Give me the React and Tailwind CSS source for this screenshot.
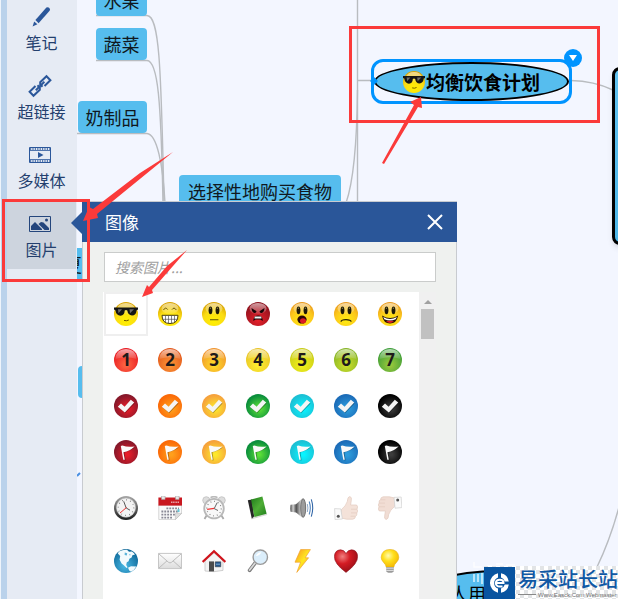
import React from "react";

const Defs = () => (
  <svg width="0" height="0" className="absolute" aria-hidden="true">
    <defs>
      <radialGradient id="face" cx="50%" cy="80%" r="75%">
        <stop offset="0" stopColor="#fff000" />
        <stop offset="0.6" stopColor="#fbdc14" />
        <stop offset="1" stopColor="#d9a400" />
      </radialGradient>
      <radialGradient id="faceWarm" cx="50%" cy="75%" r="75%">
        <stop offset="0" stopColor="#ffee10" />
        <stop offset="0.6" stopColor="#fcc81c" />
        <stop offset="1" stopColor="#e8961c" />
      </radialGradient>
      <radialGradient id="faceRed" cx="50%" cy="75%" r="75%">
        <stop offset="0" stopColor="#e8202a" />
        <stop offset="1" stopColor="#86101c" />
      </radialGradient>
      <linearGradient id="gloss" x1="0" y1="0" x2="0" y2="1">
        <stop offset="0" stopColor="#fff" stopOpacity="0.85" />
        <stop offset="1" stopColor="#fff" stopOpacity="0.15" />
      </linearGradient>
      <linearGradient id="shade" x1="0" y1="0" x2="0" y2="1">
        <stop offset="0" stopColor="#ffffff" />
        <stop offset="1" stopColor="#dcdcdc" />
      </linearGradient>
      <linearGradient id="dark" x1="0" y1="0" x2="0" y2="1">
        <stop offset="0" stopColor="#a8a8a8" />
        <stop offset="1" stopColor="#1c1c1c" />
      </linearGradient>
      <linearGradient id="leaf" x1="0" y1="0" x2="1" y2="1">
        <stop offset="0" stopColor="#1e7a1a" />
        <stop offset="0.5" stopColor="#4fae36" />
        <stop offset="1" stopColor="#1f7d1c" />
      </linearGradient>
      <radialGradient id="sea" cx="45%" cy="70%" r="70%">
        <stop offset="0" stopColor="#48b8e4" />
        <stop offset="1" stopColor="#0c6596" />
      </radialGradient>
      <linearGradient id="metal" x1="0" y1="0" x2="1" y2="0">
        <stop offset="0" stopColor="#4a4a4a" />
        <stop offset="0.5" stopColor="#d0d0d0" />
        <stop offset="1" stopColor="#585858" />
      </linearGradient>
      <linearGradient id="bolt" x1="0" y1="0" x2="1" y2="1">
        <stop offset="0" stopColor="#f7931e" />
        <stop offset="0.5" stopColor="#ffe820" />
        <stop offset="1" stopColor="#f08a1c" />
      </linearGradient>
      <radialGradient id="love" cx="35%" cy="30%" r="80%">
        <stop offset="0" stopColor="#f08080" />
        <stop offset="0.4" stopColor="#d41c24" />
        <stop offset="1" stopColor="#8c0c14" />
      </radialGradient>
      <radialGradient id="bulb" cx="40%" cy="35%" r="70%">
        <stop offset="0" stopColor="#fffbb0" />
        <stop offset="0.45" stopColor="#ffdf1c" />
        <stop offset="1" stopColor="#f3b400" />
      </radialGradient>
    </defs>
  </svg>
);

const Icon = ({ size = 24, children }) => (
  <svg width={size} height={size} viewBox="0 0 24 24" aria-hidden="true">
    {children}
  </svg>
);

const Ball = ({ fill }) => (
  <>
    <circle cx="12" cy="12" r="12" fill={`url(#${fill})`} />
    <ellipse cx="12" cy="6.5" rx="8.5" ry="5.5" fill="url(#gloss)" opacity="0.7" />
  </>
);

const CoolFace = ({ size }) => (
  <Icon size={size}>
    <Ball fill="face" />
    <path d="M0 5.5H24V7.5L22.6 8.3Q22 13.5 18 13.5Q14 13.3 13.3 8.6Q12 7.6 10.7 8.6Q10.5 13.5 6.5 13.8Q2.3 13.6 1.4 8.3L0 7.5Z" fill="#141414" />
    <path d="M4 7.2l4 0-3.5 4zM15.5 7.2h4.5l-4 4z" fill="#8a8a8a" opacity="0.75" />
    <path d="M10 18.4q2.5.9 4.8-.4" stroke="#6d5200" strokeWidth="1" fill="none" />
  </Icon>
);

const eyes = (
  <>
    <ellipse cx="8.5" cy="8.3" rx="1.9" ry="3.9" fill="#1c1808" />
    <ellipse cx="15.5" cy="8.3" rx="1.9" ry="3.9" fill="#1c1808" />
    <circle cx="8.4" cy="6.3" r="0.7" fill="#8a8040" />
    <circle cx="15.4" cy="6.3" r="0.7" fill="#8a8040" />
  </>
);

const faces = [
  { name: "墨镜", art: <CoolFace /> },
  {
    name: "大笑",
    art: (
      <Icon>
        <Ball fill="face" />
        <path d="M5.5 8Q7.5 4.5 9.7 7.6M14 7.6Q16 4.5 18.3 8" stroke="#5c4b10" strokeWidth="0.9" fill="none" />
        <path d="M4 13.3H20Q20 21.5 12 21.5Q4 21.5 4 13.3Z" fill="#fff" stroke="#4a3d08" />
        <path d="M4.5 17.3H19.5M7.5 13.5V20M10.5 13.5V21.3M13.5 13.5V21.3M16.5 13.5V20" stroke="#555" strokeWidth="0.7" />
      </Icon>
    ),
  },
  {
    name: "平静",
    art: (
      <Icon>
        <Ball fill="face" />
        {eyes}
        <path d="M8 17.7h8.4" stroke="#75680c" strokeWidth="1.2" />
      </Icon>
    ),
  },
  {
    name: "生气",
    art: (
      <Icon>
        <Ball fill="faceRed" />
        <path d="M5.5 6l5 3.2q-.2 2-2 1.8-2.6-.4-3-5zM18.5 6l-5 3.2q.2 2 2 1.8 2.6-.4 3-5z" fill="#160406" />
        <path d="M7.3 19Q7.4 13.6 12 13.6T16.8 19L14.4 17.6H9.6Z" fill="#160406" />
        <path d="M8.8 14.6h6.4l.4 1.8H8.4z" fill="#f4f4f4" />
      </Icon>
    ),
  },
  {
    name: "惊讶",
    art: (
      <Icon>
        <Ball fill="faceWarm" />
        {eyes}
        <ellipse cx="12" cy="17.6" rx="4.6" ry="4" fill="#2c0808" />
        <ellipse cx="13" cy="18.8" rx="3" ry="2.6" fill="#dc1c24" />
      </Icon>
    ),
  },
  {
    name: "难过",
    art: (
      <Icon>
        <Ball fill="faceWarm" />
        {eyes}
        <path d="M7 19.6q.4-2 5-2t5.2 2" stroke="#2c2408" strokeWidth="1.4" fill="none" />
      </Icon>
    ),
  },
  {
    name: "开心",
    art: (
      <Icon>
        <Ball fill="faceWarm" />
        {eyes}
        <path d="M4 13.5Q12 18.5 20.2 13.5Q18.5 21.6 12 21.6T4 13.5Z" fill="#241004" />
        <path d="M5.2 15Q12 19 18.9 15L17.7 17.2Q12 20 6.3 17.2Z" fill="#fff" />
        <path d="M8 19.6q4-1.6 8 0-4 2.8-8 0z" fill="#e01c24" />
      </Icon>
    ),
  },
];

const numberColors = [
  ["#ff6a45", "#e81820"],
  ["#ff9a38", "#e2581c"],
  ["#ffe028", "#f0942c"],
  ["#fff030", "#e8c428"],
  ["#f6f41c", "#c8cc18"],
  ["#d2e22c", "#86b424"],
  ["#a0cc3c", "#3c9c38"],
];

const numbers = numberColors.map(([inner, outer], i) => ({
  name: `数字 ${i + 1}`,
  art: (
    <Icon>
      <defs>
        <radialGradient id={`num${i}`} cx="50%" cy="70%" r="65%">
          <stop offset="0" stopColor={inner} />
          <stop offset="1" stopColor={outer} />
        </radialGradient>
      </defs>
      <circle cx="12" cy="12" r="12" fill={`url(#num${i})`} />
      <path d="M1.5 11Q2 1 12 1T22.5 11Q12 7.5 1.5 11Z" fill="url(#gloss)" opacity="0.75" />
      <text x="12" y="18" textAnchor="middle" fontSize="17" fontWeight="700" fill="#1e1a1a" className="font-['Noto_Sans','Open_Sans',sans-serif]">
        {i + 1}
      </text>
    </Icon>
  ),
}));

const tokenColors = [
  ["#e81c28", "#86182a"],
  ["#ffa01c", "#fb6a08"],
  ["#fde82c", "#f6a23c"],
  ["#5ade38", "#0a8e3c"],
  ["#08f4ff", "#1cc0d4"],
  ["#2c9cdc", "#1c6cb8"],
  ["#3c3c3c", "#000000"],
];

const token = (kind, glyph) =>
  tokenColors.map(([inner, outer], i) => ({
    name: `${kind} ${i + 1}`,
    art: (
      <Icon>
        <defs>
          <radialGradient id={`${kind}${i}`} cx="55%" cy="60%" r="55%">
            <stop offset="0.1" stopColor={inner} />
            <stop offset="1" stopColor={outer} />
          </radialGradient>
        </defs>
        <circle cx="12" cy="12" r="12" fill={`url(#${kind}${i})`} />
        {glyph}
      </Icon>
    ),
  }));

const checks = token(
  "check",
  <>
    <path d="M4.6 13.6L7.6 10.6L11 14L17.4 7L20.6 9.4L11.2 19.2Z" fill="#000" opacity="0.3" />
    <path d="M3.8 12.8L7 9.4L10.6 12.8L16.8 5.8L20.2 8.6L10.8 18.6Z" fill="#f5f5f5" />
  </>
);

const flags = token(
  "flag",
  <>
    <path d="M8 6.8Q14 8.5 21 7.6Q16.5 11 10.6 12.6L11.6 20.4L10 20.2Z" fill="#000" opacity="0.3" />
    <path d="M6.8 6L8.4 5.5Q13.5 7.4 20.6 6.4Q16 10.8 9.4 12.2L10.8 19.8H9.3Z" fill="#fafafa" />
  </>
);

const objects = [
  {
    name: "时钟",
    art: (
      <Icon>
        <circle cx="12" cy="12" r="12" fill="url(#dark)" />
        <circle cx="12" cy="11.6" r="9.6" fill="#f3f3f3" stroke="#bbb" strokeWidth="0.6" />
        <circle cx="12" cy="11.6" r="7.8" fill="none" stroke="#777" strokeWidth="1.2" strokeDasharray="0.8 3.28" />
        <path d="M9.7 5.3L12.2 12L16 14.2" stroke="#444" strokeWidth="0.9" fill="none" />
        <path d="M12.5 11.5L6 17" stroke="#e33" strokeWidth="1" />
      </Icon>
    ),
  },
  {
    name: "日历",
    art: (
      <Icon>
        <path d="M.8 9H23.6V17.5L17.4 23.6H.8Z" fill="#fafafa" stroke="#c4c4c4" strokeWidth="0.7" />
        <path d="M17.4 23.6V17.4H23.6Z" fill="#ddd" stroke="#b4b4b4" strokeWidth="0.5" />
        <path d="M.4 1.5H24V9.6H.4Z" fill="#c91820" />
        <path d="M13 6.3H21" stroke="#e7a3a6" strokeWidth="1.6" strokeDasharray="1.2 .5" />
        <path d="M3.5 0h3.6v3.4H3.5zM17.5 0h3.6v3.4h-3.6z" fill="#e8e8e8" stroke="#999" strokeWidth="0.5" />
        <path d="M8.4 12.3H21M3.4 15.5H21M3.4 18.7H17M3.4 21.6H15" stroke="#8a8a96" strokeWidth="1.8" strokeDasharray="1.9 1" />
        <path d="M19.5 13h2v3h-2z" fill="#66c8d8" />
      </Icon>
    ),
  },
  {
    name: "闹钟",
    art: (
      <Icon>
        <path d="M4.6 19.5L2.5 23M19.4 19.5L21.6 23" stroke="#aaa" strokeWidth="1.8" />
        <circle cx="4.3" cy="4.3" r="3.6" fill="#ddd" stroke="#bbb" strokeWidth="0.7" />
        <circle cx="19.7" cy="4.3" r="3.6" fill="#ddd" stroke="#bbb" strokeWidth="0.7" />
        <path d="M8.5 1.6Q12-.3 15.5 1.6" stroke="#bbb" strokeWidth="1.6" fill="none" />
        <circle cx="12" cy="12.6" r="9.8" fill="#f8f8f8" stroke="#b8b8b8" strokeWidth="1.8" />
        <circle cx="12" cy="12.6" r="7.2" fill="none" stroke="#777" strokeWidth="1.2" strokeDasharray="0.8 2.97" />
        <path d="M15.2 6.6L12.2 12.6L16 14.5" stroke="#555" strokeWidth="0.9" fill="none" />
        <path d="M12.2 12.4L5.2 13.4" stroke="#e33" strokeWidth="1.1" />
      </Icon>
    ),
  },
  {
    name: "书本",
    art: (
      <Icon>
        <path d="M1.8 4.3L6 3.6L8.2 21.3L5.8 22.8Z" fill="#262626" />
        <path d="M5.8 22.8L8.2 20.6L20 17.4L20.8 18.6Z" fill="#e8ece8" stroke="#aaa" strokeWidth="0.4" />
        <path d="M5 3.5L16.4.6L20.6 17.8L8.4 21Z" fill="url(#leaf)" />
      </Icon>
    ),
  },
  {
    name: "喇叭",
    art: (
      <Icon>
        <path d="M.6 8.7Q0 12 .6 15.8L6 16.4V8.2Z" fill="url(#metal)" />
        <path d="M6 8.2L12.2 2.6Q15.4 2 15.8 12Q15.4 22 12.2 21.6L6 16.4Z" fill="url(#metal)" />
        <ellipse cx="13.2" cy="12" rx="2.5" ry="9.2" fill="#9c9c9c" stroke="#6a6a6a" strokeWidth="0.8" />
        <path d="M17.3 8q1.3 4 0 8" stroke="#8ea8c8" strokeWidth="1" fill="none" />
        <path d="M19.2 5.5q2.2 6.5 0 13" stroke="#5686bc" strokeWidth="1.1" fill="none" />
        <path d="M21.3 3.4q2.8 8.6 0 17.2" stroke="#3468a8" strokeWidth="1.1" fill="none" />
      </Icon>
    ),
  },
  {
    name: "赞",
    art: (
      <Icon>
        <path d="M7.4 13.5Q12 10 13.3 5.5Q13.6.6 15.8.5Q18.2.8 17.2 5L16.6 9H22.6Q24.4 10.6 23 13.2Q24.4 15.2 22.8 17Q23.4 19.4 21.5 20.4Q21.4 22.8 18.8 23.2H12.5L7.4 22Z" fill="#f4e2d9" stroke="#e2cabf" strokeWidth="0.7" />
        <path d="M17 13.2h5.8M17 16.9h5.6M16.6 20.2h4.6" stroke="#e2cabf" strokeWidth="0.7" />
        <path d="M.6 12.6L6.8 12.9L8.4 23L1 23.6Z" fill="#fafafa" stroke="#d0d0d0" strokeWidth="0.7" />
        <circle cx="4.3" cy="20.3" r="1.5" fill="#555" />
      </Icon>
    ),
  },
  {
    name: "踩",
    art: (
      <Icon>
        <path d="M16.6 10.5Q12 14 10.7 18.5Q10.4 23.4 8.2 23.5Q5.8 23.2 6.8 19L7.4 15H1.4Q-.4 13.4 1 10.8Q-.4 8.8 1.2 7Q.6 4.6 2.5 3.6Q2.6 1.2 5.2.8H11.5L16.6 2Z" fill="#f1ddd4" stroke="#e2cabf" strokeWidth="0.7" />
        <path d="M1.2 10.8H7M1.4 7.1H7M2.8 3.8H7.4" stroke="#e2cabf" strokeWidth="0.7" />
        <path d="M16 1.4L23.2 1L23.8 11.6L17 12.2Z" fill="#fafafa" stroke="#d0d0d0" strokeWidth="0.7" />
        <circle cx="19.7" cy="3.9" r="1.5" fill="#555" />
      </Icon>
    ),
  },
  {
    name: "地球",
    art: (
      <Icon>
        <circle cx="12" cy="12" r="12" fill="url(#sea)" />
        <path d="M5 2.4Q9 .4 13 .8L15 2.8L18 2.4Q20 3.8 21 5.6L18.4 6.2L17.6 8.6L15.4 9.8L14.6 12.2L12.8 13.2L12.2 16L13.6 18.2L12.6 19L9.8 16.2L7.6 14.6L5.6 10.8L6.2 7L3.8 4.6Z" fill="#f2fafd" />
        <path d="M14 18.8L17 17.2L22.4 17.6Q20.4 21.2 17 22.8L15.2 21.6Z" fill="#f2fafd" />
        <path d="M10.8 3.6l2.4.6-.4 2.2-2.2-.4zM15 5l1.6.4-.6 1.4z" fill="#5cb4da" />
      </Icon>
    ),
  },
  {
    name: "邮件",
    art: (
      <Icon>
        <path d="M.5 4.4H23.5V19.6H.5Z" fill="url(#shade)" stroke="#c6c6c6" />
        <path d="M.8 19.2L9 11.8M23.2 19.2L15 11.8M.8 4.8L10.6 13.4Q12 14.4 13.4 13.4L23.2 4.8" stroke="#bcbcbc" fill="none" />
      </Icon>
    ),
  },
  {
    name: "房子",
    art: (
      <Icon>
        <path d="M3 11.8L12 3.8L21 11.8V21.4Q12 23.6 3 22Z" fill="#f4f4f4" stroke="#bdbdbd" strokeWidth="0.7" />
        <path d="M7 12.4H12V22.4H7Z" fill="#4c4c4c" />
        <path d="M13.2 12.8H18.8V17.8H13.2Z" fill="#28588c" stroke="#333" strokeWidth="0.5" />
        <path d="M14 15.2h4" stroke="#7bacd4" strokeWidth="1" />
        <path d="M.6 13L12 2.2L23.4 13" stroke="#d0141c" strokeWidth="2.2" fill="none" />
      </Icon>
    ),
  },
  {
    name: "放大镜",
    art: (
      <Icon>
        <path d="M9.6 13.4L3.6 21.4" stroke="#777" strokeWidth="3.6" strokeLinecap="round" />
        <path d="M9.6 13.4L3.6 21" stroke="#d8d8d8" strokeWidth="1.8" strokeLinecap="round" />
        <circle cx="14.3" cy="8.2" r="7.2" fill="#dbeefb" stroke="#9a9a9a" strokeWidth="1.4" />
        <path d="M9.8 7Q11.4 3.2 15.4 3.2Q13.6 6.8 9.8 7Z" fill="#fff" />
      </Icon>
    ),
  },
  {
    name: "闪电",
    art: (
      <Icon>
        <path d="M10.6.6H20.4L15.2 8.8H18.6L6.8 23.4L10.6 13.2H5Z" fill="url(#bolt)" stroke="#f0a030" strokeWidth="0.7" />
      </Icon>
    ),
  },
  {
    name: "爱心",
    art: (
      <Icon>
        <path d="M12 23.4Q0 14.6.4 7.4Q.8 1.2 6.4.8Q10.4.8 12 4.6Q13.8.8 17.8.8Q23.2 1.2 23.6 7.4Q24 14.6 12 23.4Z" fill="url(#love)" stroke="#8a1420" strokeWidth="0.6" />
      </Icon>
    ),
  },
  {
    name: "灯泡",
    art: (
      <Icon>
        <path d="M8.2 18.2Q8 15.6 5.4 13.2Q3.2 11 3.2 8.2Q3.8.6 12 .4Q20.2.6 20.8 8.2Q20.8 11 18.6 13.2Q16 15.6 15.8 18.2Z" fill="url(#bulb)" stroke="#e6b010" strokeWidth="0.6" />
        <path d="M8.2 18H15.8V22Q15.6 23.8 12 23.8T8.2 22Z" fill="#9a9a9a" />
        <path d="M8.2 19.2H15.8M8.2 21.4H15.8" stroke="#e8e8e8" strokeWidth="0.9" />
      </Icon>
    ),
  },
];

const navItems = [
  {
    label: "笔记",
    art: (
      <>
        <path d="M7.4 15L18.4 2.6Q20 1.8 21.4 3Q22.6 4.4 21.6 5.8L10.6 18.2Z" fill="#2b579a" />
        <path d="M6.2 16.4L9.4 19.2L4.6 21.6Z" fill="#2b579a" />
      </>
    ),
  },
  {
    label: "超链接",
    art: (
      <g fill="none" stroke="#2b579a" strokeWidth="2">
        <path d="M14.5 12.8L12.2 10.4V8.2L18.5 2.2L22.4 6.2L16.5 12" />
        <path d="M9.500 11.2L11.800 13.6V15.8L5.5 21.8L1.600 17.8L7.500 12" />
        <path d="M7.8 16.2L16.400 7.800" />
      </g>
    ),
  },
  {
    label: "多媒体",
    art: (
      <>
        <path d="M1.5 4.5H22.5V19.5H1.5Z" fill="none" stroke="#2b579a" />
        <path d="M2 6H22M2 18H22" stroke="#2b579a" strokeWidth="1.4" strokeDasharray="1.2 1.2" />
        <path d="M2 7.5H22M2 16.5H22" stroke="#2b579a" strokeWidth="0.8" />
        <path d="M10 9L15.5 12L10 15Z" fill="#2b579a" />
      </>
    ),
  },
  {
    label: "图片",
    active: true,
    art: (
      <>
        <path d="M1.5 4.5H22.5V19.5H1.5Z" fill="none" stroke="#24467c" />
        <path d="M3 18V14L7 10L14 17V18ZM10.500 12L13 10L15.500 10.500L21 16V18H16.500Z" fill="#24467c" />
        <circle cx="18.500" cy="8" r="1.500" fill="#24467c" />
      </>
    ),
  },
];

const Cell = ({ item, selected }) => (
  <button
    type="button"
    aria-label={item.name}
    className={
      selected
        ? "flex items-center justify-center border-2 border-[#efefef] bg-white"
        : "flex items-center justify-center border-2 border-transparent"
    }
  >
    {item.art}
  </button>
);

const Topic = ({ className, children }) => (
  <div
    className={`absolute flex h-8 items-center justify-center rounded bg-[#56bdee] text-[18px] leading-6 whitespace-nowrap text-[#101820] ${className}`}
  >
    {children}
  </div>
);

const ImagePanel = () => (
  <section aria-label="图像" className="absolute top-[201px] bottom-0 left-[5px] flex w-[375px] flex-col border-x border-t border-[#c8cbd0] bg-[#eff1ef]">
    <svg width="12" height="24" viewBox="0 0 12 24" className="absolute top-[9px] -left-3" aria-hidden="true">
      <path d="M12 0V24L0 12Z" fill="#2a5699" />
    </svg>
    <header className="-mx-px flex h-10 shrink-0 items-center justify-between bg-[#2a5699] pr-3.5 pl-[23px]">
      <h2 className="text-[17px] leading-6 text-white">图像</h2>
      <button type="button" aria-label="关闭" className="flex">
        <svg width="16" height="16" viewBox="0 0 16 16" aria-hidden="true">
          <path d="M1 1L15 15M15 1L1 15" stroke="#fff" strokeWidth="2" />
        </svg>
      </button>
    </header>
    <div className="flex min-h-0 flex-1 flex-col gap-2.5 px-5 pt-2.5">
      <input
        type="text"
        aria-label="搜索图片"
        placeholder="搜索图片..."
        className="ml-px h-[30px] shrink-0 border border-[#cacccb] bg-white px-2.5 text-sm italic outline-none placeholder:text-[#a0a0a0]"
      />
      <div className="flex min-h-0 flex-1">
        <div className="flex-1 overflow-hidden bg-white pr-[7px] pl-px">
          <div className="grid auto-rows-[44px] grid-cols-7 gap-y-0.5">
            {[...faces, ...numbers, ...checks, ...flags].map((item, i) => (
              <Cell key={item.name} item={item} selected={i === 0} />
            ))}
          </div>
          <div className="mt-2 grid auto-rows-[52px] grid-cols-7 gap-y-px">
            {objects.map((item) => (
              <Cell key={item.name} item={item} />
            ))}
          </div>
        </div>
        <div className="flex w-[17px] flex-col items-center gap-1 bg-[#f0f0f0] pt-[7px]">
          <svg width="8" height="6" viewBox="0 0 8 6" aria-hidden="true">
            <path d="M4 1L8 5H0Z" fill="#a0a0a0" />
          </svg>
          <div className="h-[30px] w-[13px] bg-[#c1c1c1]" />
        </div>
      </div>
    </div>
  </section>
);

const Watermark = () => (
  <div className="absolute right-0 bottom-0 flex h-[33px] w-[134px] items-center gap-[3px] bg-[repeating-conic-gradient(#ffffff_0_25%,#e2e4e6_0_50%)] bg-size-[8px_8px]">
    <svg width="31" height="32" viewBox="0 0 31 32" className="shrink-0" aria-hidden="true">
      <path d="M0 0H31V32H0Z" fill="#0854a0" />
      <path d="M14 6.2A10 10 0 0 0 14 25.800V21.6A6 6 0 0 1 14 10.400Z" fill="#fff" />
      <path d="M17 6.2A10 10 0 0 1 24.800 14.5H20.800A6 6 0 0 0 17 10.400ZM17 25.800A10 10 0 0 0 24.800 17.500H20.800A6 6 0 0 1 17 21.600Z" fill="#fff" />
      <path d="M11.500 16H19.500Q19.500 12.800 15.800 12.800T11.800 16Q12 19.500 15.800 19.500H18.500" fill="none" stroke="#fff" strokeWidth="2" />
    </svg>
    <div className="flex flex-col whitespace-nowrap">
      <span className="text-[20px] leading-6 font-medium text-[#0f58a4]">易采站长站</span>
      <span className="flex items-center gap-0.5 font-['Liberation_Sans',sans-serif] text-[6px] leading-[8px] text-[#707070]">
        <span className="h-px w-[18px] bg-[#888888]" />
        Www.Easck.Com Webmaster
      </span>
    </div>
  </div>
);

export default function App() {
  return (
    <div className="relative flex h-screen overflow-hidden bg-[#f3f6ff] font-['Noto_Sans_CJK_SC',sans-serif]">
      <Defs />
      <nav className="flex w-[77px] shrink-0 border-l border-[#eef4fb] bg-[#e6ebf4]">
        <div className="w-1.5 shrink-0 bg-[#bad2eb]" />
        <div className="-mt-[5px] flex flex-1 flex-col gap-0.5">
          {navItems.map(({ label, art, active }) => (
            <button
              key={label}
              type="button"
              className={
                active
                  ? "mr-px flex h-[67px] flex-col items-center gap-[3px] bg-[#cdd4de] pt-2.5 text-base leading-5 text-[#24406e]"
                  : "mr-px flex h-[67px] flex-col items-center gap-[3px] pt-2.5 text-base leading-5 text-[#24406e]"
              }
            >
              <span className="mr-1 block">
                <Icon>{art}</Icon>
              </span>
              <span>{label}</span>
            </button>
          ))}
        </div>
      </nav>

      <main className="relative flex-1 overflow-hidden">
        <svg className="absolute inset-0 h-full w-full" aria-hidden="true">
          <g transform="translate(-77 0)" fill="none" stroke="#b9bcc0" strokeWidth="1.4">
            <path d="M96 15.5H147C159 16 161 60 164 203" />
            <path d="M96 60.5H147C158 61 161 100 163 203" />
            <path d="M77 133.500H147C157 134 163 165 165 203" />
            <path d="M357.500 0V203M357.500 80.500H373" />
            <path d="M357.500 90C357 140 354 180 346 203" />
            <path d="M571 80.500Q594 81 613 90" />
            <path d="M619 507Q610 540 597 567" />
          </g>
          <g transform="translate(-77 0)">
            <ellipse cx="500" cy="598" rx="86" ry="27" fill="#56bdee" stroke="#000" strokeWidth="2" />
            <path d="M77 476L80 473" stroke="#4a90e2" strokeWidth="2" />
            <path d="M474 562V567H482M487 566H492M496 564H503M506 565H515M474 574V582M478 574V582M482 573V584" fill="none" stroke="#fff" strokeWidth="1.500" opacity="0.8" />
          </g>
        </svg>

        <Topic className="-top-4 left-[19px] w-[51px]">水果</Topic>
        <Topic className="top-7 left-[19px] w-[51px]">蔬菜</Topic>
        <Topic className="top-[101px] left-px w-[69px]">奶制品</Topic>
        <Topic className="top-[175px] left-[102px] w-[162px]">选择性地购买食物</Topic>
        <Topic className="top-[248px] -left-10 w-[72px]">夏</Topic>
        <Topic className="top-[366px] left-px w-20"></Topic>

        <div className="absolute top-[67px] left-[535px] h-[178px] w-40 rounded-lg border-[3px] border-black bg-linear-to-b from-[#62c2f0] to-[#4db6e8] shadow-md" />

        <div className="absolute top-[59px] left-[294px] h-[45px] w-[201px] rounded-xl border-[3px] border-[#0094ff]">
          <div className="flex h-full items-center justify-center gap-px rounded-[50%] border-2 border-black bg-[#56bdee] text-[19px] leading-6 font-bold whitespace-nowrap text-black">
            <CoolFace size={22} />
            <span>均衡饮食计划</span>
          </div>
          <svg width="8" height="8" viewBox="0 0 8 8" className="absolute top-[15px] -left-1" aria-hidden="true">
            <path d="M4 0L8 4L4 8L0 4Z" fill="#0094ff" />
          </svg>
          <button type="button" aria-label="展开" className="absolute -top-[13px] -right-[13px] flex size-[18px] items-center justify-center rounded-full bg-[#0094ff]">
            <svg width="8" height="6" viewBox="0 0 8 6" aria-hidden="true">
              <path d="M0 0H8L4 6Z" fill="#fff" />
            </svg>
          </button>
        </div>

        <p className="absolute top-[581px] left-[373px] text-[18px] leading-6 whitespace-nowrap text-black">人用</p>
      </main>

      <div className="absolute inset-y-0 left-[77px]">
        <ImagePanel />
      </div>

      <Watermark />

      <svg className="pointer-events-none absolute inset-0 h-full w-full" aria-hidden="true">
        <g fill="none" stroke="#fb3a3a" strokeWidth="3">
          <path d="M350.500 27.500H598.500V121.500H350.500Z" />
          <path d="M3.500 200.500H88.500V280.500H3.500Z" />
        </g>
        <g fill="#fb3a3a">
          <path d="M173 152L97 214L98 218L83 221L89 207L93 209L140 173Z" />
          <path d="M187 250L152 290L153 293L142 297L147 285L149 287L167 266Z" />
          <path d="M421 97L422 108L418 107L384 164L382 163L414 105L410 102Z" />
        </g>
      </svg>
    </div>
  );
}
